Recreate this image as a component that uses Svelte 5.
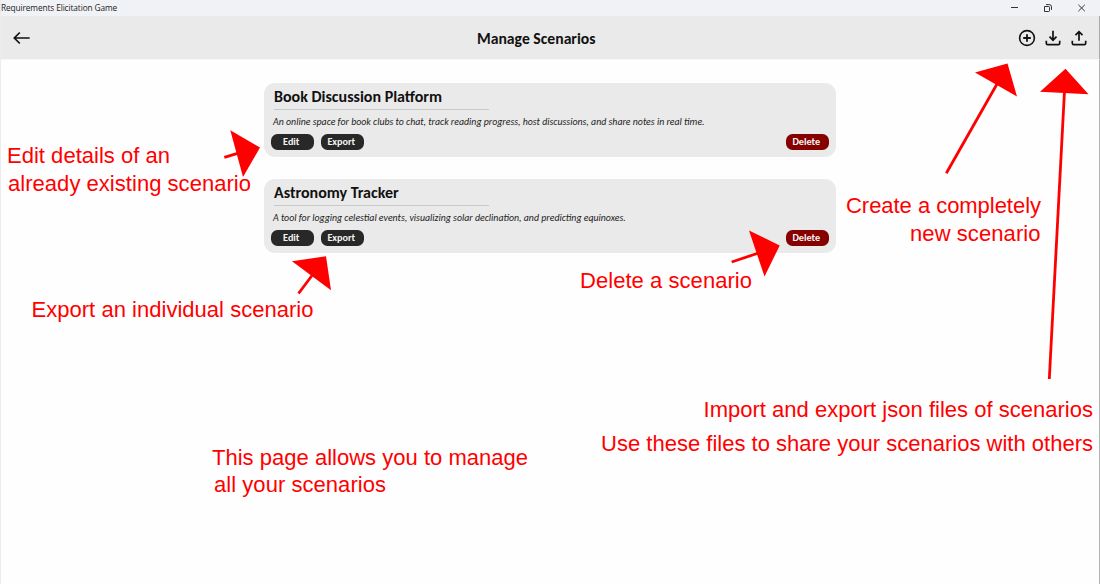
<script>
  const scenarios = [
    {
      title: 'Book Discussion Platform',
      description: 'An online space for book clubs to chat, track reading progress, host discussions, and share notes in real time.'
    },
    {
      title: 'Astronomy Tracker',
      description: 'A tool for logging celestial events, visualizing solar declination, and predicting equinoxes.'
    }
  ];

  const notes = [
    { x: 7, y: 163, w: 163, text: 'Edit details of an' },
    { x: 8, y: 191, w: 243, text: 'already existing scenario' },
    { x: 31.5, y: 317, w: 282, text: 'Export an individual scenario' },
    { x: 580, y: 288, w: 172, text: 'Delete a scenario' },
    { x: 846, y: 213, w: 195, text: 'Create a completely' },
    { x: 910, y: 241, w: 130.5, text: 'new scenario' },
    { x: 703.5, y: 417, w: 389.5, text: 'Import and export json files of scenarios' },
    { x: 601, y: 451, w: 492, text: 'Use these files to share your scenarios with others' },
    { x: 212, y: 465, w: 316, text: 'This page allows you to manage' },
    { x: 214, y: 492, w: 172, text: 'all your scenarios' }
  ];

  const arrows = [
    { line: 'M224.3 157.3L240 152.6', head: '230.3,130.3 260,147.5 243,177' },
    { line: 'M298.5 293.5L312 275.5', head: '292,261.3 326,256.3 331,290.3' },
    { line: 'M731.7 262L760 252.5', head: '749,230.5 779.7,245.5 764.5,276.5' },
    { line: 'M946.3 173.3L997 84', head: '975,72.5 1007.5,63.5 1017,96.5' },
    { line: 'M1049.3 379L1064.5 91', head: '1040,91.8 1065.5,68.7 1088.5,94.2' }
  ];
</script>

<div class="window">
  <div class="titlebar">
    <span class="app-name">Requirements Elicitation Game</span>
    <svg class="controls" width="100" height="16" viewBox="0 0 100 16" fill="none" stroke="#333" stroke-width="1">
      <path d="M11 7.5h7" />
      <path d="M44.5 6.5h4.2a.8.8 0 0 1 .8.8v3.4a.8.8 0 0 1-.8.8h-4.2zM46 4.6h3.2q2.3 0 2.3 2.2v3.1" />
      <path d="M78.4 4.8l6.4 6.4M84.8 4.8l-6.4 6.4" />
    </svg>
  </div>
  <header>
    <svg class="back" width="18" height="14" viewBox="0 0 18 14" fill="none" stroke="#111" stroke-width="1.7">
      <path d="M6.8 1.5L1.3 7l5.5 5.5M1.5 7h15.2" />
    </svg>
    <h1>Manage Scenarios</h1>
    <div class="actions">
      <svg width="18" height="18" viewBox="0 0 18 18" fill="none" stroke="#111" stroke-width="1.6">
        <circle cx="9" cy="9" r="7.4" /><path d="M9 5.2v7.6M5.2 9h7.6" stroke-width="1.8" />
      </svg>
      <svg width="18" height="18" viewBox="0 0 18 18" fill="none" stroke="#111" stroke-width="1.7">
        <path d="M9 1.8v9.2M5.5 7.7L9 11.2l3.5-3.5M2.3 11.8v2.4q0 1.4 1.4 1.4h10.6q1.4 0 1.4-1.4v-2.4" />
      </svg>
      <svg width="18" height="18" viewBox="0 0 18 18" fill="none" stroke="#111" stroke-width="1.7">
        <path d="M9 11.7V2.6M5.5 6.1L9 2.6l3.5 3.5M2.3 11.8v2.4q0 1.4 1.4 1.4h10.6q1.4 0 1.4-1.4v-2.4" />
      </svg>
    </div>
  </header>
  <main>
    {#each scenarios as s}
      <article>
        <h2>{s.title}</h2>
        <p>{s.description}</p>
        <div class="buttons">
          <button>Edit</button>
          <button>Export</button>
          <button class="delete">Delete</button>
        </div>
      </article>
    {/each}
  </main>
  <svg class="notes" width="1100" height="584" viewBox="0 0 1100 584">
    {#each arrows as a}
      <path d={a.line} />
      <polygon points={a.head} />
    {/each}
    {#each notes as n}
      <text x={n.x} y={n.y} textLength={n.w}>{n.text}</text>
    {/each}
  </svg>
</div>

<style>
  :global(body) { margin: 0; background: #fefefe; }
  .window {
    position: relative;
    box-sizing: border-box;
    width: 1100px;
    height: 584px;
    overflow: hidden;
    background: #fefefe;
    font-family: Carlito, Lato, sans-serif;
    color: #111;
    display: flex;
    flex-direction: column;
    border-left: 1px solid #ececec;
  }
  .titlebar {
    flex: none;
    height: 16px;
    margin-left: -1px;
    background: #f0f2f5;
    display: flex;
    justify-content: space-between;
  }
  .app-name {
    font: 8.3px/16px "Open Sans", sans-serif;
    letter-spacing: -.11px;
    padding-left: 1px;
    color: #222;
    white-space: nowrap;
  }
  header {
    flex: none;
    box-sizing: border-box;
    height: 44px;
    background: #eaeaea;
    display: grid;
    grid-template-columns: 464px auto 1fr;
    align-items: center;
    padding: 0 11px 0 12px;
    border-right: 1px solid #aaa;
    border-bottom: 1px solid #f6f6f6;
  }
  .back { display: block; }
  h1 {
    margin: 2px 0 0;
    font-size: 15.7px;
    line-height: 18px;
    font-weight: 700;
    white-space: nowrap;
  }
  .actions { display: flex; justify-content: flex-end; gap: 8px; padding-right: .5px; }
  .actions svg { display: block; }
  main {
    flex: 1;
    padding: 23px 0 0 263px;
    border-right: 1px solid #b4b4b4;
    display: flex;
    flex-direction: column;
    gap: 22px;
  }
  article {
    box-sizing: border-box;
    width: 572px;
    height: 74px;
    flex: none;
    background: #eaeaea;
    border-radius: 11px;
    padding: 4px 7px 0 7px;
    display: flex;
    flex-direction: column;
  }
  h2 {
    box-sizing: border-box;
    width: 215px;
    height: 23px;
    flex: none;
    margin: 0 0 0 3px;
    font-size: 16px;
    line-height: 20px;
    font-weight: 700;
    white-space: nowrap;
    border-bottom: 1px solid #c8cac9;
  }
  p {
    margin: 4px 0 0 2px;
    height: 16px;
    font-size: 9.87px;
    line-height: 16px;
    font-style: italic;
    white-space: nowrap;
    color: #222;
  }
  .buttons { display: flex; gap: 7px; margin-top: 4px; }
  button {
    width: 43px;
    height: 16px;
    padding: 0 2.5px 0 0;
    border: 0;
    border-radius: 6.5px;
    background: #282828;
    color: #f4f4f4;
    font: 700 10.2px/16px Carlito, Lato, sans-serif;
    text-align: center;
  }
  .delete { margin-left: auto; background: #870000; }
  .notes { position: absolute; left: -1px; top: 0; pointer-events: none; }
  .notes text { font: 22px "Liberation Sans", sans-serif; fill: #f00; }
  .notes path { fill: none; stroke: #f00; stroke-width: 2.8; }
  .notes polygon { fill: #f00; }
</style>
